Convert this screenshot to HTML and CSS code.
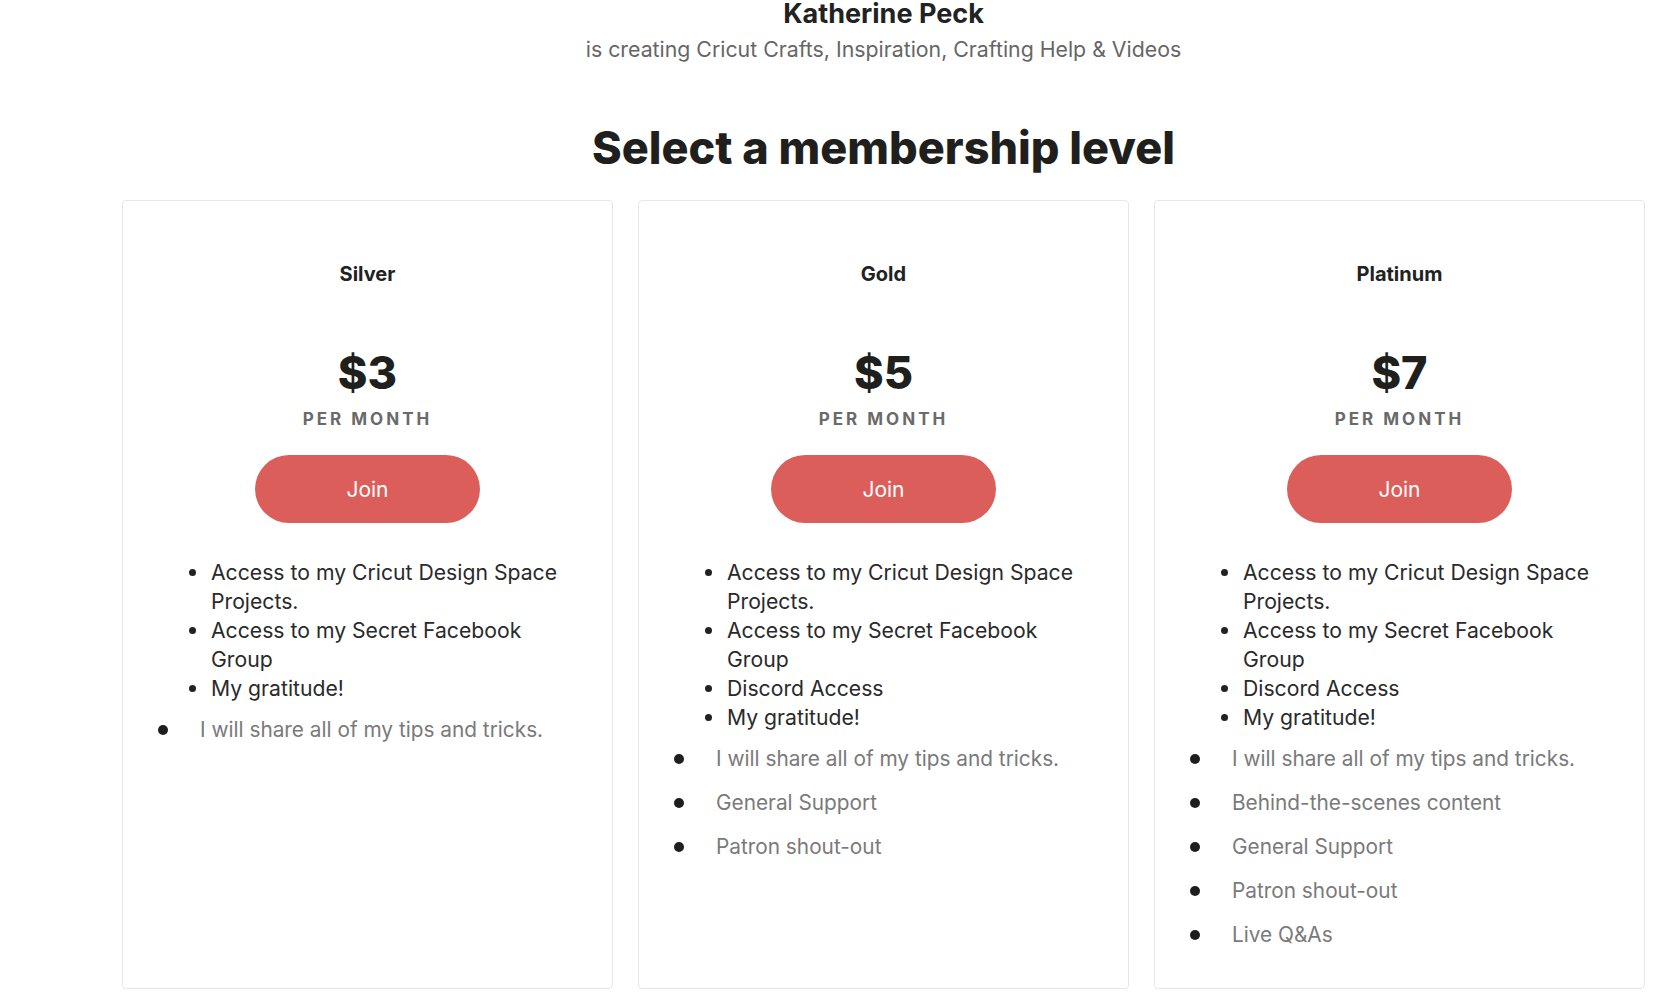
FILE: index.html
```html
<!DOCTYPE html>
<html lang="en">
<head>
<meta charset="utf-8">
<title>Select a membership level</title>
<link rel="stylesheet" href="styles.css">
</head>
<body>
<main class="page">
  <header class="creator">
    <h2 class="creator-name">Katherine Peck</h2>
    <p class="creator-desc">is creating Cricut Crafts, Inspiration, Crafting Help &amp; Videos</p>
  </header>
  <h1 class="title">Select a membership level</h1>
  <section class="tiers">
    <article class="tier">
      <h3 class="tier-name">Silver</h3>
      <div class="price">$3</div>
      <div class="period">PER MONTH</div>
      <button class="join">Join</button>
      <ul class="desc">
        <li>Access to my Cricut Design Space Projects.</li>
        <li>Access to my Secret Facebook Group</li>
        <li>My gratitude!</li>
      </ul>
      <ul class="benefits">
        <li>I will share all of my tips and tricks.</li>
      </ul>
    </article>
    <article class="tier">
      <h3 class="tier-name">Gold</h3>
      <div class="price">$5</div>
      <div class="period">PER MONTH</div>
      <button class="join">Join</button>
      <ul class="desc">
        <li>Access to my Cricut Design Space Projects.</li>
        <li>Access to my Secret Facebook Group</li>
        <li>Discord Access</li>
        <li>My gratitude!</li>
      </ul>
      <ul class="benefits">
        <li>I will share all of my tips and tricks.</li>
        <li>General Support</li>
        <li>Patron shout-out</li>
      </ul>
    </article>
    <article class="tier">
      <h3 class="tier-name">Platinum</h3>
      <div class="price">$7</div>
      <div class="period">PER MONTH</div>
      <button class="join">Join</button>
      <ul class="desc">
        <li>Access to my Cricut Design Space Projects.</li>
        <li>Access to my Secret Facebook Group</li>
        <li>Discord Access</li>
        <li>My gratitude!</li>
      </ul>
      <ul class="benefits">
        <li>I will share all of my tips and tricks.</li>
        <li>Behind-the-scenes content</li>
        <li>General Support</li>
        <li>Patron shout-out</li>
        <li>Live Q&amp;As</li>
      </ul>
    </article>
  </section>
</main>
</body>
</html>
```
FILE: styles.css
```css
* { box-sizing: border-box; }
html, body { margin: 0; padding: 0; background: #ffffff; }
body {
  font-family: Inter, "Noto Sans", "Liberation Sans", sans-serif;
  color: #222222;
  width: 1658px;
  height: 1004px;
  overflow: hidden;
}
.page {
  padding: 0 13px 0 122px;
}
.creator { text-align: center; }
.creator-name {
  margin: 0;
  font-size: 27px;
  line-height: 28px;
  font-weight: 700;
  color: #222222;
}
.creator-desc {
  margin: 7px 0 0;
  font-size: 21.3px;
  line-height: 28px;
  color: #666666;
}
.title {
  margin: 57px 0 0;
  text-align: center;
  font-size: 45px;
  line-height: 56px;
  font-weight: 800;
  letter-spacing: 0;
  color: #1f1f1d;
}
.tiers {
  margin-top: 24px;
  display: grid;
  grid-template-columns: repeat(3, 1fr);
  gap: 25px;
}
.tier {
  height: 789px;
  border: 1px solid #e7e7e7;
  border-radius: 4px;
  padding: 59px 0 0;
  display: flex;
  flex-direction: column;
  align-items: center;
  background: #fff;
}
.tier-name {
  margin: 0;
  font-size: 20px;
  line-height: 28px;
  font-weight: 700;
  color: #222;
}
.price {
  margin-top: 59px;
  font-size: 45px;
  line-height: 52px;
  font-weight: 800;
  color: #1f1f1d;
}
.period {
  margin-top: 8px;
  font-size: 17px;
  line-height: 24px;
  font-weight: 700;
  letter-spacing: 3px;
  color: #6a6a6a;
}
.join {
  margin-top: 24px;
  width: 225px;
  height: 68px;
  border: none;
  border-radius: 34px;
  background: #dc5e5b;
  color: #fff;
  font-family: inherit;
  font-size: 21px;
  padding: 0;
}
.desc, .benefits {
  align-self: stretch;
  list-style: none;
  margin: 0;
}
.desc {
  margin-top: 35px;
  padding: 0 36px 0 88px;
}
.desc li {
  position: relative;
  font-size: 21.2px;
  line-height: 29px;
  color: #2a2a2a;
}
.desc li::before {
  content: "";
  position: absolute;
  left: -22px;
  top: 11px;
  width: 7px;
  height: 7px;
  border-radius: 50%;
  background: #222;
}
.benefits {
  margin-top: 12px;
  padding: 0 20px 0 77px;
}
.benefits li {
  position: relative;
  font-size: 20.8px;
  line-height: 29px;
  color: #7a7a7a;
  margin-bottom: 15px;
}
.benefits li::before {
  content: "";
  position: absolute;
  left: -42px;
  top: 10px;
  width: 10px;
  height: 10px;
  border-radius: 50%;
  background: #1e1e1e;
}
```
